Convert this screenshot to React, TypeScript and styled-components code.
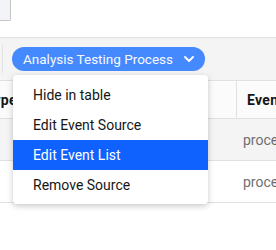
import React from "react";
import styled, { createGlobalStyle } from "styled-components";

const Global = createGlobalStyle`
  body {
    margin: 0;
    background: #ffffff;
    font-family: Roboto, "Liberation Sans", Arial, sans-serif;
    overflow: hidden;
  }
`;

const Page = styled.div`
  position: relative;
  width: 276px;
  height: 250px;
  overflow: hidden;
`;

const TopBar = styled.div`
  height: 37px;
  border-bottom: 1px solid #e0e0e0;
  background: #ffffff;
`;

const SearchBox = styled.div`
  width: 11px;
  height: 21px;
  box-sizing: border-box;
  background: #f2f4f8;
  border-right: 1px solid #c6c6c6;
  border-bottom: 1px solid #c6c6c6;
  border-bottom-right-radius: 2px;
`;

const Toolbar = styled.div`
  display: flex;
  align-items: center;
  height: 42px;
  padding-left: 2px;
  background: #f4f4f4;
  border-bottom: 1px solid #e0e0e0;
`;

const Separator = styled.div`
  width: 1px;
  height: 28px;
  background: #e0e0e0;
`;

const Pill = styled.button`
  display: flex;
  align-items: center;
  gap: 11px;
  height: 24px;
  margin-left: 9px;
  padding: 0 11px;
  border: none;
  border-radius: 12px;
  background: #4589ff;
  color: #f8f9ff;
  font-family: inherit;
  font-size: 13.5px;
  line-height: 24px;
  cursor: pointer;
`;

const TableWrap = styled.div`
  overflow: hidden;
`;

const Table = styled.div`
  margin-left: -31px;
`;

const Row = styled.div<{ $head?: boolean; $shade?: boolean }>`
  display: grid;
  grid-template-columns: 268px 120px;
  height: ${(p) => (p.$head ? 37 : 41)}px;
  border-bottom: 1px solid #e0e0e0;
  background: ${(p) => (p.$head ? "#fbfbfb" : p.$shade ? "#f4f4f4" : "#ffffff")};
`;

const Cell = styled.div<{ $head?: boolean; $divider?: boolean; $pad?: number }>`
  display: flex;
  align-items: center;
  padding-left: ${(p) => p.$pad ?? 6}px;
  border-right: ${(p) => (p.$divider ? "1px solid #e0e0e0" : "none")};
  font-size: 14px;
  font-weight: ${(p) => (p.$head ? 700 : 400)};
  letter-spacing: ${(p) => (p.$head ? "0.3px" : "0")};
  color: ${(p) => (p.$head ? "#161616" : "#6f6f6f")};
  white-space: nowrap;
  overflow: hidden;
`;

const Menu = styled.ul`
  position: absolute;
  left: 13px;
  top: 75px;
  width: 195px;
  margin: 0;
  padding: 5px 0 4px;
  list-style: none;
  background: #ffffff;
  border-radius: 4px;
  box-shadow: 0 2px 6px rgba(0, 0, 0, 0.22);
`;

const MenuItem = styled.li<{ $active?: boolean }>`
  height: 30px;
  display: flex;
  align-items: center;
  padding-left: 20px;
  font-size: 14px;
  color: ${(p) => (p.$active ? "#ffffff" : "#161616")};
  background: ${(p) => (p.$active ? "#0f62fe" : "transparent")};
`;

const Chevron = () => (
  <svg width="10" height="6" viewBox="0 0 10 6" fill="none">
    <path d="M1 1l4 4 4-4" stroke="#ffffff" strokeWidth="1.8" strokeLinecap="round" strokeLinejoin="round" />
  </svg>
);

const items = ["Hide in table", "Edit Event Source", "Edit Event List", "Remove Source"];

export default function App() {
  return (
    <Page>
      <Global />
      <TopBar>
        <SearchBox />
      </TopBar>
      <Toolbar>
        <Separator />
        <Pill>
          Analysis Testing Process
          <Chevron />
        </Pill>
      </Toolbar>
      <TableWrap>
        <Table>
          <Row $head>
            <Cell $head $divider $pad={16}>Type</Cell>
            <Cell $head $pad={10}>Event List</Cell>
          </Row>
          <Row $shade>
            <Cell />
            <Cell>process</Cell>
          </Row>
          <Row>
            <Cell />
            <Cell>process</Cell>
          </Row>
        </Table>
      </TableWrap>
      <Menu>
        {items.map((t) => (
          <MenuItem key={t} $active={t === "Edit Event List"}>
            {t}
          </MenuItem>
        ))}
      </Menu>
    </Page>
  );
}
